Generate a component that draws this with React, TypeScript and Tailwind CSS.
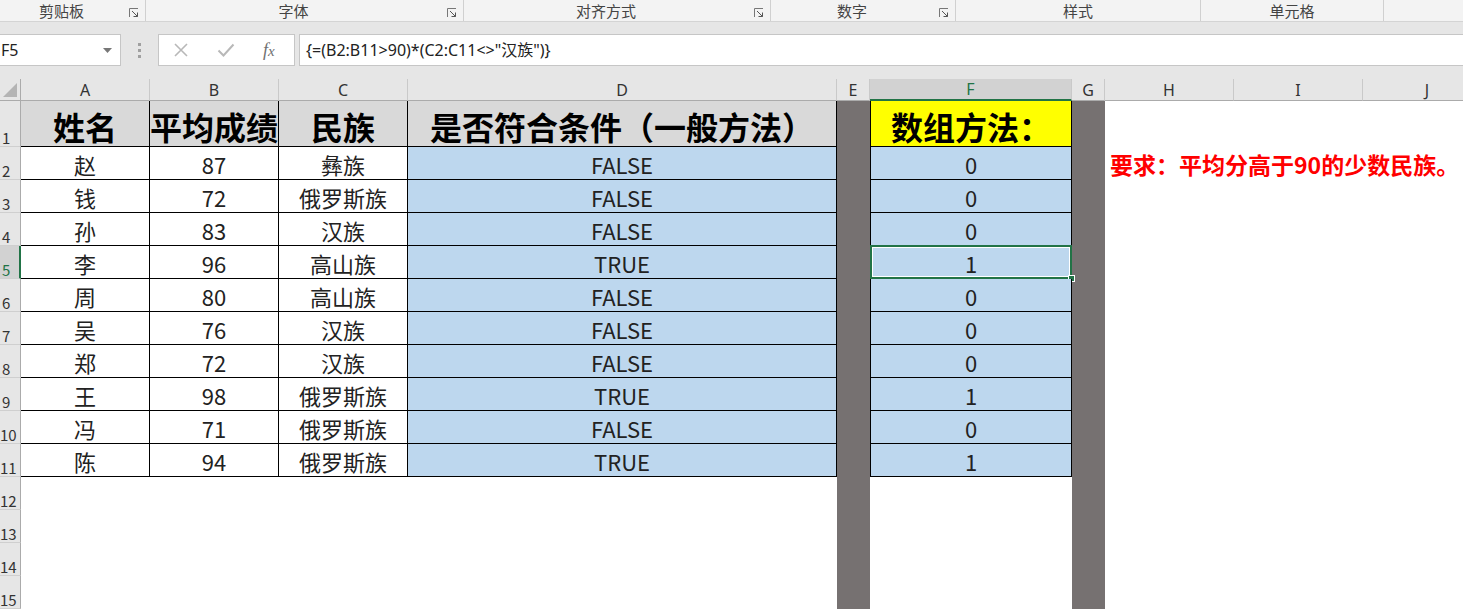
import React from "react";

const names = ["赵", "钱", "孙", "李", "周", "吴", "郑", "王", "冯", "陈"];
const scores = [87, 72, 83, 96, 80, 76, 72, 98, 71, 94];
const groups = ["彝族", "俄罗斯族", "汉族", "高山族", "高山族", "汉族", "汉族", "俄罗斯族", "俄罗斯族", "俄罗斯族"];
const flags = [false, false, false, true, false, false, false, true, false, true];

const letters = ["A", "B", "C", "D", "E", "F", "G", "H", "I", "J"];

function Launcher() {
  return (
    <svg width="10" height="10" viewBox="0 0 10 10" className="shrink-0">
      <path d="M0.5 9V0.5H9" fill="none" stroke="#777" strokeWidth="1" />
      <path d="M3 3L8.5 8.5M8.5 4.5V8.5H4.5" fill="none" stroke="#555" strokeWidth="1" />
    </svg>
  );
}

function RibbonGroup({ label, width, launcher }: { label: string; width: string; launcher?: boolean }) {
  return (
    <div className={`relative flex h-full items-center border-r border-[#d0d0d0] ${width}`}>
      <span className={`flex-1 text-center ${launcher ? "pr-[22px]" : ""}`}>{label}</span>
      {launcher && (
        <span className="absolute right-[6px] top-[8px]">
          <Launcher />
        </span>
      )}
    </div>
  );
}

function RowHead({ n, active }: { n: number; active?: boolean }) {
  return (
    <div
      className={`flex items-end border-b border-[#cfcfcf] pb-[1px] text-[15px] leading-none ${
        active
          ? "border-r-2 border-r-[#217346] bg-[#d2d2d2] text-[#217346]"
          : "border-r border-r-[#ababab] bg-[#e6e6e6] text-[#333]"
      } ${n >= 10 ? "pl-0" : "pl-[2px]"}`}
    >
      {n}
    </div>
  );
}

const cellBase = "flex items-center justify-center whitespace-nowrap border-r border-b border-black";

export default function App() {
  return (
    <div className="h-[609px] w-[1463px] overflow-hidden bg-white font-['Noto_Sans_CJK_SC','Noto_Sans',sans-serif] text-[#222]">
      {/* ribbon group labels */}
      <div className="flex h-[22px] border-b border-[#d4d4d4] bg-[#f3f3f3] text-[15px] leading-none text-[#444]">
        <RibbonGroup label="剪贴板" width="w-[146px]" launcher />
        <RibbonGroup label="字体" width="w-[318px]" launcher />
        <RibbonGroup label="对齐方式" width="w-[307px]" launcher />
        <RibbonGroup label="数字" width="w-[185px]" launcher />
        <RibbonGroup label="样式" width="w-[245px]" />
        <RibbonGroup label="单元格" width="w-[183px]" />
        <div className="flex-1" />
      </div>

      {/* formula bar */}
      <div className="flex h-[57px] flex-col bg-[#e6e6e6] pt-[12px]">
        <div className="flex h-[32px] items-stretch">
          <div className="flex w-[121px] items-center justify-between border border-l-0 border-[#c6c6c6] bg-white pl-[1px] pr-[8px] text-[16px]">
            <span className="font-['Noto_Sans',sans-serif]">F5</span>
            <svg width="9" height="5" viewBox="0 0 9 5">
              <path d="M0 0H9L4.5 5Z" fill="#777" />
            </svg>
          </div>
          <div className="flex w-[37px] flex-col items-center justify-center gap-[3px]">
            <span className="h-[3px] w-[3px] bg-[#a0a0a0]" />
            <span className="h-[3px] w-[3px] bg-[#a0a0a0]" />
            <span className="h-[3px] w-[3px] bg-[#a0a0a0]" />
          </div>
          <div className="flex w-[137px] items-center border border-[#c6c6c6] bg-white">
            <svg width="16" height="16" viewBox="0 0 16 16" className="ml-[14px]">
              <path d="M2 2L14 14M14 2L2 14" stroke="#b8b8b8" strokeWidth="1.6" />
            </svg>
            <svg width="18" height="16" viewBox="0 0 18 16" className="ml-[28px]">
              <path d="M1.5 8.5L6.5 13.5L16.5 2.5" fill="none" stroke="#b8b8b8" strokeWidth="2" />
            </svg>
            <span className="ml-[28px] font-['Liberation_Serif',serif] text-[18px] italic leading-none text-[#707070]">
              f<span className="text-[15px]">x</span>
            </span>
          </div>
          <div className="ml-[4px] flex flex-1 items-center border border-r-0 border-[#c6c6c6] bg-white pl-[6px] text-[16px]">
            <span className="font-['Noto_Sans','Noto_Sans_CJK_SC',sans-serif]">{'{=(B2:B11>90)*(C2:C11<>"汉族")}'}</span>
          </div>
        </div>
      </div>

      {/* sheet */}
      <div className="grid grid-cols-[21px_129px_129px_129px_429px_33px_202px_33px_129px_129px_129px] grid-rows-[22px_46px_repeat(14,33px)]">
        {/* column header row */}
        <div className="relative border-r border-b border-[#ababab] bg-[#e6e6e6]">
          <svg width="14" height="14" viewBox="0 0 14 14" className="absolute bottom-[3px] right-[3px]">
            <path d="M14 0V14H0Z" fill="#b4b4b4" />
          </svg>
        </div>
        {letters.map((l) => (
          <div
            key={l}
            className={`flex items-center justify-center font-['Noto_Sans',sans-serif] text-[16px] leading-none ${
              l === "F"
                ? "border-b-2 border-b-[#217346] border-r border-r-[#c9c9c9] bg-[#d2d2d2] text-[#217346]"
                : "border-b border-b-[#ababab] border-r border-r-[#c9c9c9] bg-[#e6e6e6] text-[#333]"
            }`}
          >
            {l}
          </div>
        ))}

        {/* row 1 */}
        <RowHead n={1} />
        {["姓名", "平均成绩", "民族", "是否符合条件（一般方法）"].map((t) => (
          <div key={t} className={`${cellBase} overflow-hidden bg-[#d9d9d9] pt-[4px] text-[32px] font-bold leading-none text-black`}>
            {t}
          </div>
        ))}
        <div className="bg-[#767171]" />
        <div className={`${cellBase} border-l bg-[#ffff00] pt-[4px] text-[32px] font-bold leading-none text-black`}>数组方法：</div>
        <div className="bg-[#767171]" />
        <div />
        <div />
        <div />

        {/* data rows */}
        {names.map((name, i) => {
          const row = i + 2;
          const active = row === 5;
          return (
            <React.Fragment key={name + i}>
              <RowHead n={row} active={active} />
              <div className={`${cellBase} pt-[2px] text-[22px] leading-none`}>{name}</div>
              <div className={`${cellBase} pt-[2px] text-[22px] leading-none`}>{scores[i]}</div>
              <div className={`${cellBase} pt-[2px] text-[22px] leading-none`}>{groups[i]}</div>
              <div className={`${cellBase} bg-[#bdd7ee] pt-[2px] text-[22px] leading-none`}>{flags[i] ? "TRUE" : "FALSE"}</div>
              <div className="bg-[#767171]" />
              <div className={`${cellBase} relative border-l bg-[#bdd7ee] pt-[2px] text-[22px] leading-none`}>
                {flags[i] ? 1 : 0}
                {active && (
                  <>
                    <span className="absolute -inset-[1px] border-2 border-[#217346] shadow-[inset_0_0_0_1px_white]" />
                    <span className="absolute -bottom-[4px] -right-[4px] h-[7px] w-[7px] border border-white bg-[#217346]" />
                  </>
                )}
              </div>
              <div className="bg-[#767171]" />
              <div className="relative">
                {row === 2 && (
                  <span className="absolute left-[5px] top-[6px] whitespace-nowrap text-[23px] font-bold leading-none text-[#ff0000]">
                    要求：平均分高于90的少数民族。
                  </span>
                )}
              </div>
              <div />
              <div />
            </React.Fragment>
          );
        })}

        {/* empty rows */}
        {[12, 13, 14, 15].map((row) => (
          <React.Fragment key={row}>
            <RowHead n={row} />
            <div />
            <div />
            <div />
            <div />
            <div className="bg-[#767171]" />
            <div />
            <div className="bg-[#767171]" />
            <div />
            <div />
            <div />
          </React.Fragment>
        ))}
      </div>
    </div>
  );
}
